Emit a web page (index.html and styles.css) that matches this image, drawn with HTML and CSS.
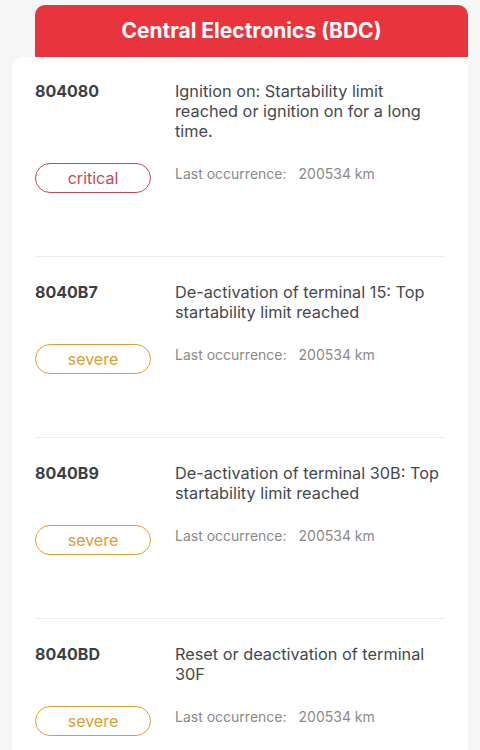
FILE: index.html
```html
<!DOCTYPE html>
<html lang="en">
<head>
  <meta charset="UTF-8">
  <meta name="viewport" content="width=device-width, initial-scale=1.0">
  <title>Fault Memory</title>
  <link rel="stylesheet" href="styles.css">
</head>
<body>
  <div class="panel">
    <div class="panel-title">Central Electronics (BDC)</div>
    <div class="card">
      <div class="fault">
        <div class="code">804080</div>
        <div class="desc">Ignition on: Startability limit reached or ignition on for a long time.</div>
        <div class="badge critical">critical</div>
        <div class="last"><span>Last occurrence:</span><span>200534 km</span></div>
      </div>
      <div class="fault">
        <div class="code">8040B7</div>
        <div class="desc">De-activation of terminal 15: Top startability limit reached</div>
        <div class="badge severe">severe</div>
        <div class="last"><span>Last occurrence:</span><span>200534 km</span></div>
      </div>
      <div class="fault">
        <div class="code">8040B9</div>
        <div class="desc">De-activation of terminal 30B: Top startability limit reached</div>
        <div class="badge severe">severe</div>
        <div class="last"><span>Last occurrence:</span><span>200534 km</span></div>
      </div>
      <div class="fault">
        <div class="code">8040BD</div>
        <div class="desc">Reset or deactivation of terminal 30F</div>
        <div class="badge severe">severe</div>
        <div class="last"><span>Last occurrence:</span><span>200534 km</span></div>
      </div>
    </div>
  </div>
</body>
</html>
```

FILE: styles.css
```css
body {
  margin: 0;
  background-color: #f6f6f6;
  font-family: Inter, "Noto Sans", sans-serif;
}

.panel {
  margin: 5px 12px 0 12px;
}

.panel-title {
  margin-left: 23px;
  height: 52px;
  line-height: 52px;
  background-color: #e8343d;
  border-radius: 10px 10px 0 0;
  color: #fff;
  font-size: 21px;
  font-weight: 700;
  text-align: center;
}

.card {
  background-color: #fff;
  border-top-left-radius: 10px;
  padding: 0 23px;
}

.fault {
  display: grid;
  grid-template-columns: 140px 1fr;
  row-gap: 22px;
  padding: 25px 0 63px 0;
  border-bottom: 1px solid #ececec;
}

.fault:first-child {
  padding-top: 24px;
}

.code {
  font-size: 16px;
  font-weight: 700;
  line-height: 20px;
  color: #3b3f46;
}

.desc {
  font-size: 16.3px;
  line-height: 20px;
  color: #44484e;
}

.badge {
  width: 114px;
  height: 28px;
  line-height: 28px;
  border: 1px solid;
  border-radius: 15px;
  text-align: center;
  font-size: 16px;
}

.critical {
  color: #c24a57;
  border-color: #c24a57;
}

.severe {
  color: #d9a032;
  border-color: #d9a032;
}

.last {
  display: flex;
  gap: 12px;
  font-size: 14px;
  line-height: 22px;
  color: #8a8a8a;
}
```
